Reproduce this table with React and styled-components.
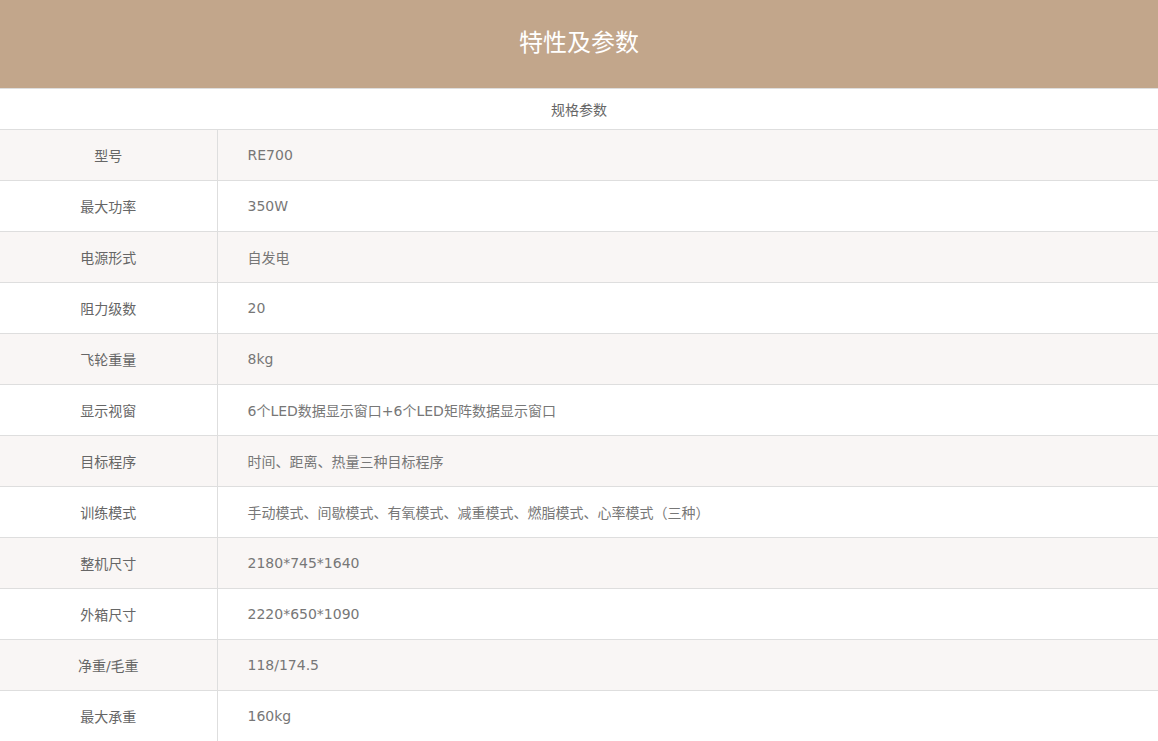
import React from 'react';
import styled, { createGlobalStyle } from 'styled-components';

const GlobalStyle = createGlobalStyle`
  body {
    margin: 0;
    background: #ffffff;
    font-family: "DejaVu Sans", "Noto Sans CJK SC", sans-serif;
  }
`;

const specs = [
  ['型号', 'RE700'],
  ['最大功率', '350W'],
  ['电源形式', '自发电'],
  ['阻力级数', '20'],
  ['飞轮重量', '8kg'],
  ['显示视窗', '6个LED数据显示窗口+6个LED矩阵数据显示窗口'],
  ['目标程序', '时间、距离、热量三种目标程序'],
  ['训练模式', '手动模式、间歇模式、有氧模式、减重模式、燃脂模式、心率模式（三种）'],
  ['整机尺寸', '2180*745*1640'],
  ['外箱尺寸', '2220*650*1090'],
  ['净重/毛重', '118/174.5'],
  ['最大承重', '160kg'],
];

const Page = styled.div`
  width: 100%;
`;

const Banner = styled.h2`
  margin: 0;
  height: 89px;
  box-sizing: border-box;
  padding-bottom: 8px;
  display: flex;
  align-items: center;
  justify-content: center;
  background: #c2a68b;
  color: #ffffff;
  font-family: "Noto Sans CJK SC", sans-serif;
  font-size: 24px;
  font-weight: normal;
  border-bottom: 1px solid #dedede;
`;

const Table = styled.table`
  width: 100%;
  border-collapse: collapse;
  font-size: 14px;
  color: #777777;
`;

const Caption = styled.th`
  height: 40px;
  padding: 0;
  font-weight: normal;
  text-align: center;
  color: #666666;
  border-bottom: 1px solid #dedede;
`;

const Row = styled.tr`
  background: ${p => (p.$striped ? '#f9f6f5' : '#ffffff')};
`;

const Label = styled.td`
  width: 217px;
  height: 50px;
  padding: 0;
  text-align: center;
  color: #666666;
  border-bottom: 1px solid #dedede;
  border-right: 1px solid #dedede;
  box-sizing: border-box;
`;

const Value = styled.td`
  height: 50px;
  padding: 0 0 0 30px;
  text-align: left;
  color: #777777;
  border-bottom: 1px solid #dedede;
`;

export default function App() {
  return (
    <Page>
      <GlobalStyle />
      <Banner>特性及参数</Banner>
      <Table>
        <thead>
          <tr>
            <Caption colSpan={2}>规格参数</Caption>
          </tr>
        </thead>
        <tbody>
          {specs.map(([k, v], i) => (
            <Row key={k} $striped={i % 2 === 0}>
              <Label>{k}</Label>
              <Value>{v}</Value>
            </Row>
          ))}
        </tbody>
      </Table>
    </Page>
  );
}
